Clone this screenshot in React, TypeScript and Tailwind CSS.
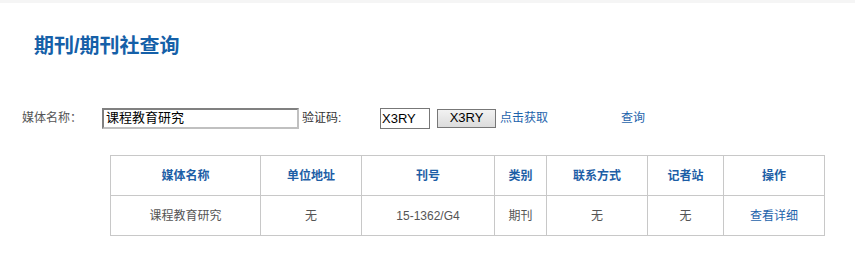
import React from "react";

const cols = [
  { h: "媒体名称", w: 150, v: "课程教育研究" },
  { h: "单位地址", w: 101, v: "无" },
  { h: "刊号", w: 133, v: "15-1362/G4" },
  { h: "类别", w: 52, v: "期刊" },
  { h: "联系方式", w: 101, v: "无" },
  { h: "记者站", w: 76, v: "无" },
  { h: "操作", w: 101, v: "查看详细", link: true },
];

export default function App() {
  return (
    <div
      className="w-[855px] h-[256px] bg-white overflow-hidden"
      style={{ fontFamily: '"Liberation Sans", "Noto Sans CJK SC", sans-serif' }}
    >
      <div className="h-[3px] bg-[#f5f5f5]" />
      <div className="pl-[34px] pt-[30px] h-[103px]">
        <h1 className="text-[20px] font-bold text-[#1560a8] leading-[26px]">期刊/期刊社查询</h1>
      </div>
      <div className="flex items-center h-[24px] text-[12px]">
        <span className="ml-[22px] w-[80px] text-[#555]">媒体名称：</span>
        <div className="w-[197px] h-[21px] border-2 border-[#808080] border-r-[#c0c0c0] border-b-[#c0c0c0] flex items-center pl-[2px] text-[13px] text-black">
          课程教育研究
        </div>
        <span className="ml-[3px] w-[78px] text-[#333]">验证码:</span>
        <div className="w-[50px] h-[21px] border border-[#777] flex items-center pl-[1px] text-[13px] text-black leading-none">
          X3RY
        </div>
        <div className="ml-[7px] w-[59px] h-[19px] border border-[#777] bg-gradient-to-b from-[#f2f2f2] to-[#dcdcdc] flex items-center justify-center text-[13px] text-black">
          X3RY
        </div>
        <span className="ml-[4px] text-[#1d63ab]">点击获取</span>
        <span className="ml-[73px] text-[#1d63ab]">查询</span>
      </div>
      <div className="pl-[110px] pt-[25px]">
        <table className="border-collapse table-fixed w-[715px] text-[12px]">
          <colgroup>
            {cols.map((c) => (
              <col key={c.h} style={{ width: c.w }} />
            ))}
          </colgroup>
          <thead>
            <tr>
              {cols.map((c) => (
                <th
                  key={c.h}
                  className="h-[40px] border border-[#c8c8c8] font-bold text-[#1d5ea6] text-center"
                >
                  {c.h}
                </th>
              ))}
            </tr>
          </thead>
          <tbody>
            <tr>
              {cols.map((c) => (
                <td
                  key={c.h}
                  className={`h-[40px] border border-[#c8c8c8] text-center ${c.link ? "text-[#1d63ab]" : "text-[#555]"}`}
                >
                  {c.v}
                </td>
              ))}
            </tr>
          </tbody>
        </table>
      </div>
    </div>
  );
}
